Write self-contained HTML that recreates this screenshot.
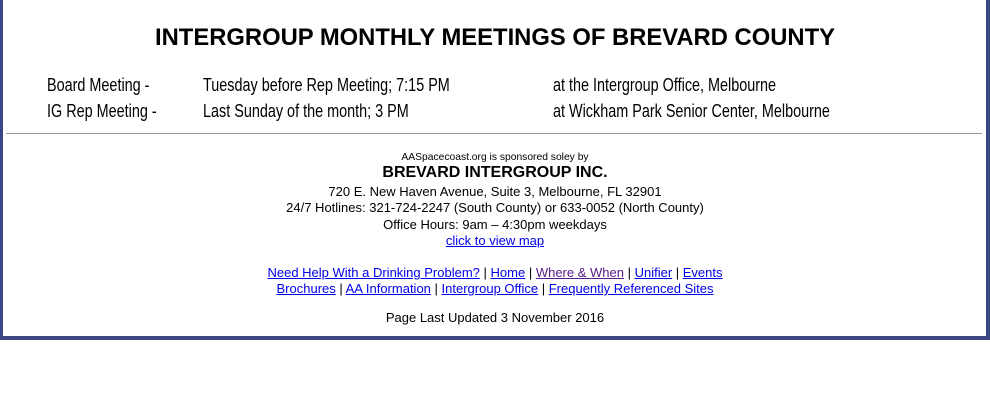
<!DOCTYPE html>
<html><head><meta charset="utf-8"><style>
html,body{margin:0;padding:0;background:#fff;width:990px;height:400px;overflow:hidden}
.frame{position:absolute;left:0;top:-10px;width:983px;height:346px;border:4px solid #3b4684;border-top:none;border-left-width:3px}
.t{position:absolute;font-family:"Liberation Sans",Arial,sans-serif;color:#000;white-space:nowrap}
.title{left:0;width:990px;text-align:center;top:24px;font-size:23.8px;font-weight:bold}
.row{font-size:18px;transform:scaleX(0.8);transform-origin:0 0}
.c{left:0;width:990px;text-align:center;font-size:13px}
a{color:#0000ee}
a.v{color:#551a8b}
hr{position:absolute;left:6px;top:126px;width:976px;margin:0;border:none;border-top:1px solid #999;height:0}
</style></head><body>
<div class="frame"></div>
<div class="t title">INTERGROUP MONTHLY MEETINGS OF BREVARD COUNTY</div>
<div class="t row" style="left:47px;top:75px">Board Meeting -</div>
<div class="t row" style="left:203px;top:75px">Tuesday before Rep Meeting; 7:15 PM</div>
<div class="t row" style="left:553px;top:75px">at the Intergroup Office, Melbourne</div>
<div class="t row" style="left:47px;top:101px">IG Rep Meeting -</div>
<div class="t row" style="left:203px;top:101px">Last Sunday of the month; 3 PM</div>
<div class="t row" style="left:553px;top:101px">at Wickham Park Senior Center, Melbourne</div>
<hr style="top:133px">
<div class="t c" style="top:152px;font-size:10.3px">AASpacecoast.org is sponsored soley by</div>
<div class="t c" style="top:164px;font-size:16px;font-weight:bold">BREVARD INTERGROUP INC.</div>
<div class="t c" style="top:184px">720 E. New Haven Avenue, Suite 3, Melbourne, FL 32901</div>
<div class="t c" style="top:200px">24/7 Hotlines: 321-724-2247 (South County) or 633-0052 (North County)</div>
<div class="t c" style="top:217px">Office Hours: 9am – 4:30pm weekdays</div>
<div class="t c" style="top:233px"><a href="#">click to view map</a></div>
<div class="t c" style="top:265px"><a href="#">Need Help With a Drinking Problem?</a> | <a href="#">Home</a> | <a class="v" href="#">Where &amp; When</a> | <a href="#">Unifier</a> | <a href="#">Events</a></div>
<div class="t c" style="top:281px"><a href="#">Brochures</a> | <a href="#">AA Information</a> | <a href="#">Intergroup Office</a> | <a href="#">Frequently Referenced Sites</a></div>
<div class="t c" style="top:310px">Page Last Updated 3 November 2016</div>
</body></html>
